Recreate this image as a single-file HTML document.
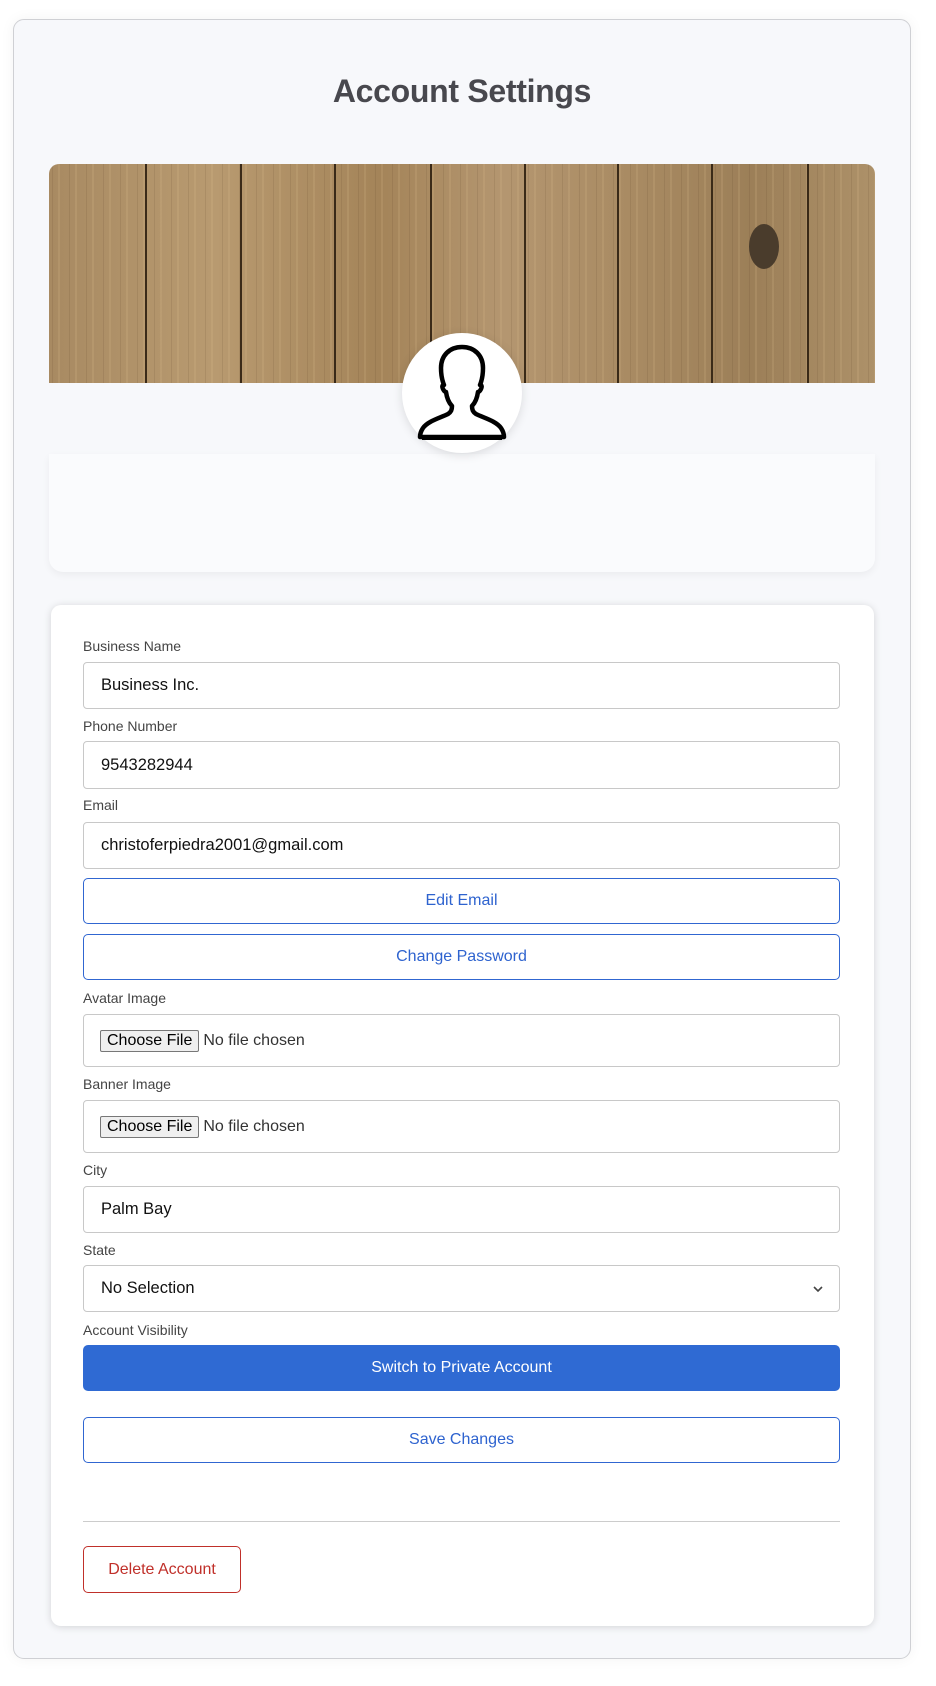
<!DOCTYPE html>
<html><head><meta charset="utf-8"><style>
*{box-sizing:border-box;margin:0;padding:0}
body{width:936px;height:1686px;background:#fff;font-family:"Liberation Sans",Arial,sans-serif;position:relative;overflow:hidden}
.a{position:absolute}
.outer{left:13px;top:19px;width:898px;height:1640px;background:#f7f8fb;border:1px solid #cfd0d4;border-radius:11px;box-shadow:0 0 14px rgba(0,0,0,.05)}
h1{position:absolute;left:13px;width:898px;top:73px;text-align:center;font-size:32px;font-weight:bold;color:#48484e;letter-spacing:-0.3px}
.banner{left:49px;top:164px;width:826px;height:219px;border-radius:10px 10px 0 0;overflow:hidden;
background:
repeating-linear-gradient(90deg,rgba(60,40,20,.0) 0 3px,rgba(80,55,30,.12) 3px 4px,rgba(0,0,0,0) 4px 9px,rgba(230,200,150,.15) 9px 11px,rgba(0,0,0,0) 11px 17px),
linear-gradient(90deg,#a88a62,#b89a70 20%,#a48459 40%,#b49670 55%,#a98b63 70%,#9c7f58 85%,#ad9169)}
.plank{position:absolute;top:0;width:2px;height:219px;background:#3a2a18}
.panel{left:49px;top:454px;width:826px;height:118px;background:#fafbfd;border-radius:0 0 14px 14px;box-shadow:0 3px 8px rgba(0,0,0,.05)}
.av{left:402px;top:333px;width:120px;height:120px;border-radius:50%;background:#fff;box-shadow:0 2px 10px rgba(0,0,0,.12)}
.card{left:51px;top:605px;width:823px;height:1021px;background:#fff;border-radius:10px;box-shadow:0 1px 8px rgba(0,0,0,.15)}
.lbl{position:absolute;left:83px;font-size:14px;color:#444}
.in{position:absolute;left:83px;width:757px;border:1px solid #c8c8c8;border-radius:4px;background:#fff;font-size:16.5px;color:#111;padding-left:17px;display:flex;align-items:center}
.btn{position:absolute;left:83px;width:757px;height:46px;border:1px solid #3066d1;border-radius:5px;color:#2e63cf;font-size:16px;display:flex;align-items:center;justify-content:center;background:#fff}
.file{font-size:16px;color:#333}
.cf{display:inline-block;border:1px solid #777;border-radius:2px;background:#efefef;color:#000;padding:1px 6px;margin-right:4px;font-size:16px}
</style></head><body>
<div class="a outer"></div>
<h1>Account Settings</h1>
<div class="a banner">
<div class="plank" style="left:96px"></div><div class="plank" style="left:191px"></div><div class="plank" style="left:285px"></div><div class="plank" style="left:381px"></div><div class="plank" style="left:475px"></div><div class="plank" style="left:568px"></div><div class="plank" style="left:662px"></div><div class="plank" style="left:758px"></div>
<div style="position:absolute;left:700px;top:60px;width:30px;height:45px;border-radius:50%;background:#4a3c2c"></div>
</div>
<div class="a panel"></div>
<div class="a av">
<svg width="120" height="120" viewBox="0 0 120 120"><path d="M60 14c-13 0-21 9-21 21 0 7 1 12 3 17-2 0-2 2-1 4 1 2 2 3 3 3 1 7 3 11 6 14 0 4-1 6-4 8-8 4-20 7-25 14-2 3-3 6-3 9h84c0-3-1-6-3-9-5-7-17-10-25-14-3-2-4-4-4-8 3-3 5-7 6-14 1 0 2-1 3-3 1-2 1-4-1-4 2-5 3-10 3-17 0-12-8-21-21-21z" fill="none" stroke="#000" stroke-width="4.5" stroke-linejoin="round"/><rect x="20" y="102" width="80" height="5" fill="#000"/></svg>
</div>
<div class="a card"></div>
<div class="lbl" style="top:638px">Business Name</div>
<div class="in" style="top:662px;height:47px">Business Inc.</div>
<div class="lbl" style="top:718px">Phone Number</div>
<div class="in" style="top:741px;height:48px">9543282944</div>
<div class="lbl" style="top:797px">Email</div>
<div class="in" style="top:822px;height:47px">christoferpiedra2001@gmail.com</div>
<div class="btn" style="top:878px">Edit Email</div>
<div class="btn" style="top:934px">Change Password</div>
<div class="lbl" style="top:990px">Avatar Image</div>
<div class="in file" style="top:1014px;height:53px;padding-left:16px"><span class="cf">Choose File</span>No file chosen</div>
<div class="lbl" style="top:1076px">Banner Image</div>
<div class="in file" style="top:1100px;height:53px;padding-left:16px"><span class="cf">Choose File</span>No file chosen</div>
<div class="lbl" style="top:1162px">City</div>
<div class="in" style="top:1186px;height:47px">Palm Bay</div>
<div class="lbl" style="top:1242px">State</div>
<div class="in" style="top:1265px;height:47px">No Selection<svg style="position:absolute;right:16px;top:19px" width="10" height="8" viewBox="0 0 10 8"><path d="M1 2l4 4 4-4" fill="none" stroke="#444" stroke-width="1.6"/></svg></div>
<div class="lbl" style="top:1322px">Account Visibility</div>
<div class="btn" style="top:1345px;background:#2f6ad3;border-color:#2f6ad3;color:#fff">Switch to Private Account</div>
<div class="btn" style="top:1417px">Save Changes</div>
<div class="a" style="left:83px;top:1521px;width:757px;height:1px;background:#ccc"></div>
<div class="btn" style="top:1546px;width:158px;height:47px;border-color:#c0302a;color:#c0302a">Delete Account</div>
</body></html>
